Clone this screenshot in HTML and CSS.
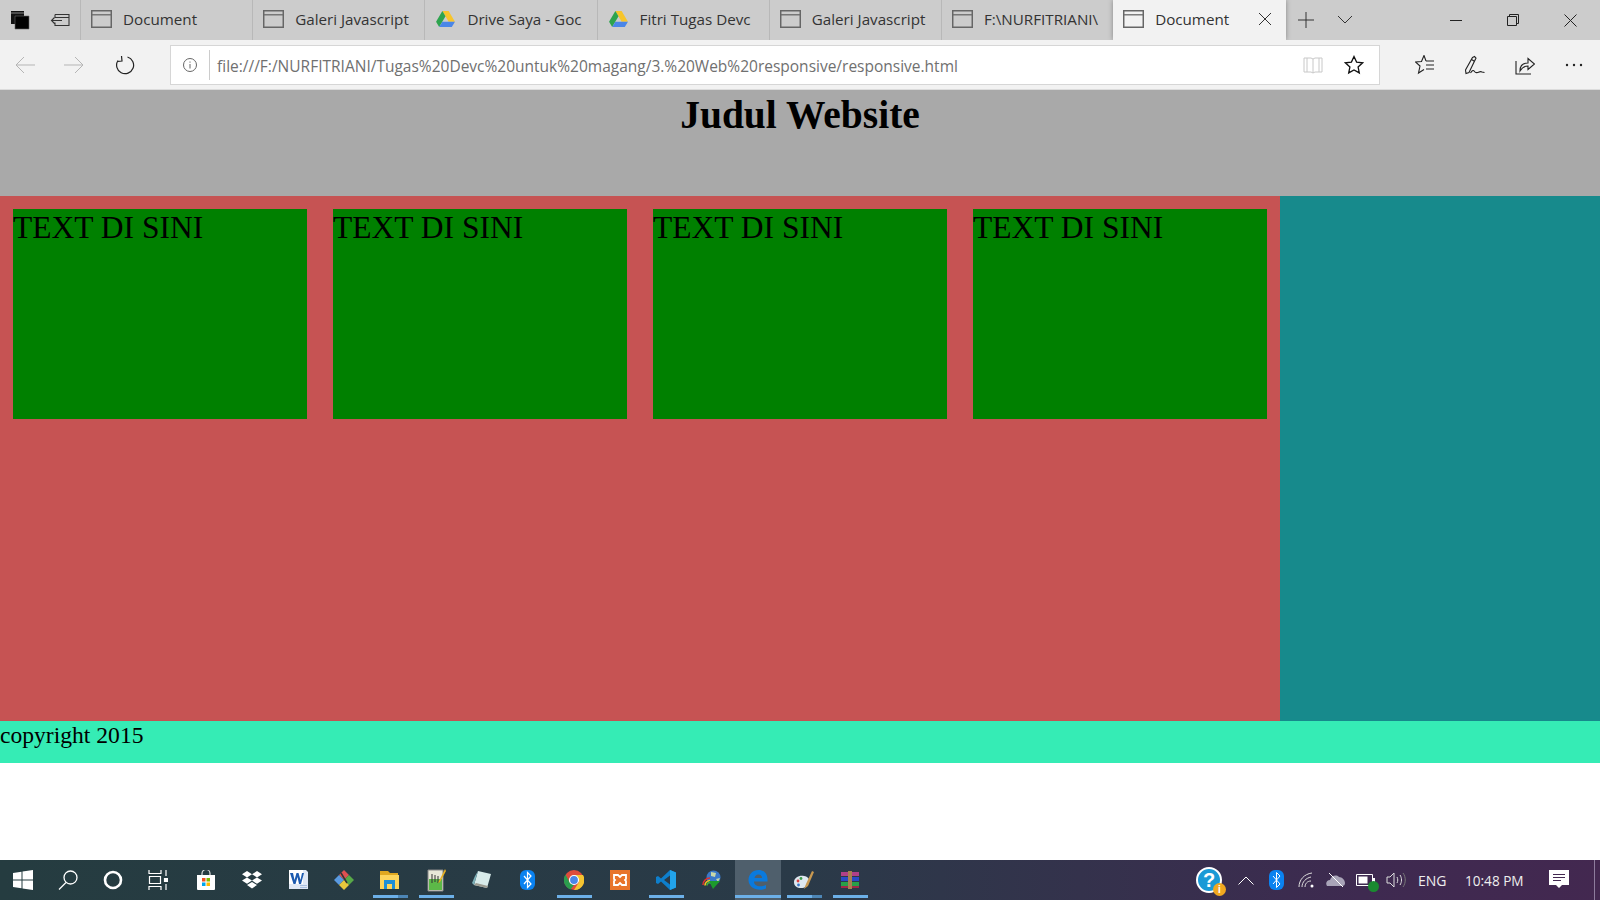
FILE: index.html
```html
<!DOCTYPE html>
<html lang="en">
<head>
  <meta charset="UTF-8" />
  <title>Document</title>
  <link rel="stylesheet" href="styles.css">
</head>
<body>
  <svg class="sprites" width="0" height="0">
    <symbol id="page" viewBox="0 0 20 17"><path d="M.7.7h18.600v15.600H.7z" fill="none" stroke="#666" stroke-width="1.400"/><path d="M1 4.500h18" stroke="#666" stroke-width="1.200"/></symbol>
    <symbol id="drive" viewBox="0 0 22 20">
      <path d="M7.500 1h7l7 12h-7z" fill="#f7c52b"/>
      <path d="M7.500 1 .5 13 4 19l7-12z" fill="#2da44e"/>
      <path d="M4 19h14l3.500-6h-14z" fill="#4a86e8"/>
    </symbol>
  </svg>

  <!-- browser tabs -->
  <div class="tabbar">
    <div class="tab-tools">
      <svg width="20" height="20" viewBox="0 0 20 20"><path d="M1 1h13v13H1z" fill="#111"/><path d="M1 3h13" stroke="#888"/><path d="M5 6h14v13H5z" fill="#000" stroke="#666" stroke-width=".6"/></svg>
      <svg width="20" height="20" viewBox="0 0 20 20" fill="none" stroke="#333" stroke-width="1.100"><path d="M5 4.500h14v11H5v-3M5 7.500v-3M5 7.500h14M12 10.500H1.500M4.500 7.500l-3 3 3 3"/></svg>
    </div>
    <div class="tab"><svg class="tab-icon"><use href="#page"/></svg><span class="tab-title">Document</span></div>
    <div class="tab"><svg class="tab-icon"><use href="#page"/></svg><span class="tab-title">Galeri Javascript</span></div>
    <div class="tab"><svg class="tab-icon"><use href="#drive"/></svg><span class="tab-title">Drive Saya - Goc</span></div>
    <div class="tab"><svg class="tab-icon"><use href="#drive"/></svg><span class="tab-title">Fitri Tugas Devc</span></div>
    <div class="tab"><svg class="tab-icon"><use href="#page"/></svg><span class="tab-title">Galeri Javascript</span></div>
    <div class="tab"><svg class="tab-icon"><use href="#page"/></svg><span class="tab-title">F:\NURFITRIANI\</span></div>
    <div class="tab active">
      <svg class="tab-icon"><use href="#page"/></svg><span class="tab-title">Document</span>
      <svg class="tab-close" width="14" height="14" viewBox="0 0 14 14"><path d="M1 1l12 12M13 1 1 13" stroke="#333" fill="none"/></svg>
    </div>
    <div class="tab-actions">
      <svg width="18" height="18" viewBox="0 0 18 18"><path d="M9 1v16M1 9h16" stroke="#333" fill="none"/></svg>
      <svg width="16" height="10" viewBox="0 0 16 10"><path d="M1 1l7 7 7-7" stroke="#333" fill="none"/></svg>
    </div>
    <div class="window-buttons">
      <svg width="12" height="12" viewBox="0 0 12 12"><path d="M0 6.500h12" stroke="#222" fill="none"/></svg>
      <svg width="12" height="12" viewBox="0 0 12 12" fill="none" stroke="#222"><path d="M.5 2.500h9v9h-9zM2.500 2.500v-2h9v9h-2"/></svg>
      <svg width="13" height="13" viewBox="0 0 13 13"><path d="M.5.5l12 12M12.500.5l-12 12" stroke="#222" fill="none"/></svg>
    </div>
  </div>

  <!-- address bar -->
  <div class="toolbar">
    <div class="nav-buttons">
      <svg width="20" height="18" viewBox="0 0 20 18" fill="none" stroke="#b5b5b5"><path d="M20 9H1M9 1 1 9l8 8"/></svg>
      <svg width="20" height="18" viewBox="0 0 20 18" fill="none" stroke="#b5b5b5"><path d="M0 9h19M11 1l8 8-8 8"/></svg>
      <svg class="refresh" width="20" height="20" viewBox="0 0 20 20" fill="none" stroke="#222" stroke-width="1.200"><path d="M12.500 2A8.500 8.500 0 1 1 3 5.500M6.500 1 7 6 2.500 6.500"/></svg>
    </div>
    <div class="address">
      <svg class="info" width="14" height="14" viewBox="0 0 14 14" fill="none" stroke="#666"><circle cx="7" cy="7" r="6.500"/><path d="M7 6v4.500M7 3.500v1.200"/></svg>
      <span class="url">file:///F:/NURFITRIANI/Tugas%20Devc%20untuk%20magang/3.%20Web%20responsive/responsive.html</span>
      <svg class="reader" width="20" height="18" viewBox="0 0 20 18" fill="none" stroke="#c8c8c8"><path d="M1 2h7l2 1 2-1h7v14h-7l-2 1-2-1H1zM10 3v14M4 2v14M16 2v14"/></svg>
      <svg class="star" width="20" height="20" viewBox="0 0 20 20" fill="none" stroke="#111" stroke-width="1.300"><path d="M10 1.500l2.600 5.600 6 .7-4.500 4.100 1.200 6L10 15l-5.300 2.900 1.200-6L1.400 7.800l6-.7z"/></svg>
    </div>
    <div class="tool-buttons">
      <svg width="20" height="20" viewBox="0 0 20 20" fill="none" stroke="#222" stroke-width="1.100"><path d="M11 6 9 .5 6.500 6.500.5 7 5 11l-1.500 7L9 14.500M11 6h8M11 10h8M11 14h8"/></svg>
      <svg width="20" height="20" viewBox="0 0 20 20" fill="none" stroke="#222" stroke-width="1.100"><path d="M7.500 2.500 9.500 1.500 11 3 4 17.500l-3 1-.5-3.500zM6.500 4.500l2.500 1.500M5.500 18c2-3 3-3 4-1.500s1.500 1.500 3 1 3-1.500 4.500-.5l2.500.5"/></svg>
      <svg width="20" height="20" viewBox="0 0 20 20" fill="none" stroke="#222" stroke-width="1.100"><path d="M1 6v13h15M5 16c0-5 3-8 8-8V3.500L19.500 9 13 14.500V11c-3 0-6 1.500-8 5z"/></svg>
      <svg width="18" height="4" viewBox="0 0 18 4" fill="#222"><circle cx="2" cy="2" r="1.200"/><circle cx="9" cy="2" r="1.200"/><circle cx="16" cy="2" r="1.200"/></svg>
    </div>
  </div>

  <!-- the page itself -->
  <header class="site-header">
    <h1>Judul Website</h1>
  </header>
  <div class="site-main">
    <div class="content">
      <div class="box">TEXT DI SINI</div>
      <div class="box">TEXT DI SINI</div>
      <div class="box">TEXT DI SINI</div>
      <div class="box">TEXT DI SINI</div>
    </div>
    <div class="sidebar"></div>
  </div>
  <footer class="site-footer">copyright 2015</footer>
  <div class="blank"></div>

  <!-- windows taskbar -->
  <div class="taskbar">
    <div class="task-sys">
      <svg width="20" height="20" viewBox="0 0 20 20" fill="#fff"><path d="M0 3l8.500-1.200V9.500H0zM9.500 1.600 20 0v9.500H9.500zM0 10.500h8.500v7.700L0 17zM9.500 10.500H20V20L9.500 18.400z"/></svg>
    </div>
    <div class="task-sys">
      <svg width="20" height="20" viewBox="0 0 20 20" fill="none" stroke="#fff" stroke-width="1.300"><circle cx="12.500" cy="7.500" r="6.500"/><path d="M8 12.500 1 19.500"/></svg>
    </div>
    <div class="task-sys">
      <svg width="20" height="20" viewBox="0 0 20 20" fill="none" stroke="#fff" stroke-width="2.600"><circle cx="10" cy="10" r="8"/></svg>
    </div>
    <div class="task-sys">
      <svg width="20" height="20" viewBox="0 0 20 20" fill="none" stroke="#fff" stroke-width="1.200"><path d="M1 0v3.500h12V0M1 20v-3.500h12V20M1.500 6.500h11v7h-11zM18 0v6M18 14v6"/><path d="M16.500 8.500h3v3h-3z" fill="#fff"/></svg>
    </div>
    <div class="task-apps">
      <div class="app">
        <svg width="20" height="20" viewBox="0 0 20 20"><path d="M6 6V3.500a4 4 0 0 1 8 0V6" fill="none" stroke="#ddd" stroke-width="1.200"/><path d="M1 5h18v14a1 1 0 0 1-1 1H2a1 1 0 0 1-1-1z" fill="#fff"/><path d="M6 8h3.500v3.500H6z" fill="#f25022"/><path d="M10.500 8H14v3.500h-3.500z" fill="#7fba00"/><path d="M6 12.500h3.500V16H6z" fill="#00a4ef"/><path d="M10.500 12.500H14V16h-3.500z" fill="#ffb900"/></svg>
      </div>
      <div class="app">
        <svg width="20" height="19" viewBox="0 0 20 19" fill="#fff"><path d="M5 0l5 3.200L5 6.400 0 3.200zM15 0l5 3.200-5 3.200-5-3.200zM5 6.400l5 3.200-5 3.200-5-3.200zM15 6.400l5 3.200-5 3.200-5-3.200zM5 14l5-3 5 3-5 3.500z"/></svg>
      </div>
      <div class="app">
        <svg width="20" height="20" viewBox="0 0 20 20"><path d="M1 0h17l2 2v17H1z" fill="#dfe8f5"/><path d="M1 0h14v14H1z" fill="#fff"/><path d="M2 3h3l1.500 7L8.500 3h2l2 7L14 3h2l-3 11h-2L9.500 7 7.500 14h-2z" fill="#1d5bb0"/><path d="M12 15h7v1h-7zM12 17h7v1h-7z" fill="#a9c0e0"/></svg>
      </div>
      <div class="app">
        <svg width="20" height="20" viewBox="0 0 20 20"><path d="M10 0l5 5-5 5-5-5z" fill="#e05050"/><path d="M5 5l5 5-5 5-5-5z" fill="#5a9ae0"/><path d="M15 5l5 5-5 5-5-5z" fill="#58a848"/><path d="M10 10l5 5-5 5-5-5z" fill="#e8c83c"/><path d="M7 3l6 10" stroke="#333" stroke-width="1.500"/></svg>
      </div>
      <div class="app running split">
        <svg width="20" height="20" viewBox="0 0 20 20"><path d="M0 1h8l2 2h8v4H0z" fill="#e0a820"/><path d="M0 5h19v14H0z" fill="#fdd55c"/><path d="M4 10h11v9h-3v-5H7v5H4z" fill="#1e8fd8"/></svg>
      </div>
      <div class="app running">
        <svg width="20" height="24" viewBox="0 0 20 24"><path d="M2 2h15v21H2z" fill="#e8e8d8" stroke="#888"/><path d="M3 11h13v11H3z" fill="#5cb848"/><path d="M6 6v9M9 7v7M12 8v7" stroke="#333"/><path d="M19 1 13 13l-1 2 2-1L20 3z" fill="#e8b020"/></svg>
      </div>
      <div class="app">
        <svg width="20" height="20" viewBox="0 0 20 20"><path d="M6 1l13 3-4 14-13-3z" fill="#d8ebea"/><path d="M2 15 6 1 3 6 0 13z" fill="#7cb0b8"/><path d="M2 15l13 3 1-2-12-3z" fill="#9a9a90"/></svg>
      </div>
      <div class="app">
        <svg width="16" height="20" viewBox="0 0 16 20"><rect width="15" height="20" rx="6" fill="#0a82f0"/><path d="M4 6l7 8-3.500 3.500v-15L11 6l-7 8" fill="none" stroke="#fff" stroke-width="1.200"/></svg>
      </div>
      <div class="app running">
        <svg width="20" height="20" viewBox="0 0 20 20"><circle cx="10" cy="10" r="10" fill="#de4c3c"/><path d="M10 5h9a10 10 0 0 1-9 15l5-8z" fill="#f4c430"/><path d="M1.500 4.500 6 13l4 2-3.500 4.500A10 10 0 0 1 1.500 4.500z" fill="#2a9d4e"/><circle cx="10" cy="10" r="4.500" fill="#4a86e8" stroke="#fff" stroke-width="1.200"/></svg>
      </div>
      <div class="app">
        <svg width="20" height="20" viewBox="0 0 20 20"><path d="M0 0h20v20H0z" fill="#e8742a"/><path d="M4 5h4l2 2 2-2h4v4l-1 1 1 1v4h-4l-2-2-2 2H4v-4l1-1-1-1z" fill="none" stroke="#fff" stroke-width="1.800"/></svg>
      </div>
      <div class="app running">
        <svg width="20" height="20" viewBox="0 0 20 20"><path d="M14 0l6 2.500v15L14 20 5 11.500l-3 2.500-2-1V7l2-1 3 2.500z" fill="#0e7fcc"/><path d="M14 0l6 2.500v15L14 20z" fill="#22a4ec"/><path d="M14 5.500 8 10l6 4.500z" fill="#2a3a48"/></svg>
      </div>
      <div class="app">
        <svg width="20" height="20" viewBox="0 0 20 20"><circle cx="11.500" cy="7.500" r="7" fill="#3a78c8"/><path d="M9 2l5 1-1 4-4-1zM14 9l4-1-2 4z" fill="#c8d8a8"/><path d="M1 15a7 7 0 0 1 7-7" fill="none" stroke="#e03030" stroke-width="1.600"/><path d="M3 15.500a5 5 0 0 1 5-5" fill="none" stroke="#f0c020" stroke-width="1.600"/><path d="M5 15.500a3 3 0 0 1 3-3" fill="none" stroke="#40b040" stroke-width="1.600"/><path d="M7 11h11l-7 8z" fill="#1c9a2c"/></svg>
      </div>
      <div class="app running current">
        <svg width="20" height="20" viewBox="0 0 20 20"><path d="M19.500 11.500H6c0 4 5 6.500 12 3.500v3.500C10 22 .5 18 .5 10 .5 4 5 0 10.500 0c5.500 0 9 4 9 9.500zM14 8c0-2-1.500-3.500-3.500-3.500S7 6 6.500 8z" fill="#0a7ade"/></svg>
      </div>
      <div class="app running split">
        <svg width="20" height="20" viewBox="0 0 20 20"><path d="M0 12c0-4 5-7 10-6 4 .8 6 3 5 6-1 4-4 6-8 6-4 0-7-2-7-6z" fill="#dfe8f0"/><circle cx="4" cy="11" r="1.400" fill="#d84040"/><circle cx="7" cy="8.500" r="1.400" fill="#3a9a48"/><circle cx="4.500" cy="15" r="1.400" fill="#3a78c8"/><path d="M18 1 12 14l-2 5 4-3L20 2z" fill="#c89850"/></svg>
      </div>
      <div class="app running">
        <svg width="20" height="18" viewBox="0 0 20 18"><path d="M1 1h18v4H1z" fill="#b04088"/><path d="M1 6h18v4H1z" fill="#2a4ac8"/><path d="M1 11h18v4H1z" fill="#28a048"/><path d="M1 15h18v2H1z" fill="#a02848"/><path d="M8 0h4v18H8z" fill="#a88050"/></svg>
      </div>
    </div>
    <div class="tray">
      <div class="tray-help">
        <span class="help-mark">?</span>
        <span class="help-badge">i</span>
      </div>
      <div class="tray-slot">
        <svg width="16" height="9" viewBox="0 0 16 9"><path d="M.5 8.500l7.500-7.500 7.500 7.500" fill="none" stroke="#fff"/></svg>
      </div>
      <div class="tray-slot">
        <svg width="15" height="20" viewBox="0 0 15 20"><rect width="15" height="20" rx="6" fill="#0a82f0"/><path d="M4 6l7 8-3.500 3.500v-15L11 6l-7 8" fill="none" stroke="#fff"/></svg>
      </div>
      <div class="tray-slot">
        <svg width="16" height="16" viewBox="0 0 16 16" fill="none" stroke="#ddd"><path d="M1 15C1 8 6 2 14 1M4 15c0-5 4-9 9-10M7 15c0-3 2-6 6-6"/><circle cx="14" cy="14" r="1.500" fill="#fff" stroke="none"/></svg>
      </div>
      <div class="tray-slot">
        <svg width="20" height="14" viewBox="0 0 20 14"><path d="M1 13c-2-3 0-6 3-6 1-4 6-6 9-3 3 0 6 3 6 6 0 2-1 3-3 3z" fill="#a9a4b8"/><path d="M3 0l14 14" stroke="#fff"/></svg>
      </div>
      <div class="tray-slot">
        <div class="tray-battery">
          <svg width="20" height="14" viewBox="0 0 20 14"><path d="M.5 1.500h16v11H.5z" fill="none" stroke="#fff"/><path d="M2.500 3.500h9v7h-9z" fill="#fff"/><path d="M17 5h2v4h-2z" fill="#fff"/></svg>
          <span class="battery-badge"></span>
        </div>
      </div>
      <div class="tray-slot">
        <svg width="20" height="16" viewBox="0 0 20 16" fill="none" stroke="#ddd"><path d="M1 5h3l4-4v14l-4-4H1zM11 5c1 2 1 4 0 6M14 3c2 3 2 7 0 10"/><path d="M17 1c3 4 3 10 0 14" stroke="#777"/></svg>
      </div>
      <span class="tray-lang">ENG</span>
      <span class="tray-clock">10:48 PM</span>
      <svg class="tray-notify" width="20" height="20" viewBox="0 0 20 20"><path fill-rule="evenodd" d="M0 0h20v15h-7l-3 3-3-3H0zM4 4v1h12V4zM4 7v1h12V7zM4 10v1h8v-1z" fill="#fff"/></svg>
    </div>
  </div>
</body>
</html>
```

FILE: styles.css
```css
/* Reset and base styles */
* {
  box-sizing: border-box;
  margin: 0;
  padding: 0;
}
body {
  display: flex;
  flex-direction: column;
  height: 100vh;
  overflow: hidden;
  background: #fff;
  color: #000;
  font-family: "Liberation Serif", serif;
}
.sprites {
  display: block;
  height: 0;
}

/* Browser tabs */
.tabbar {
  display: flex;
  height: 40px;
  flex: none;
  background: #cccccc;
  font-family: "Open Sans", sans-serif;
  font-size: 15.2px;
  color: #333;
}
.tab-tools {
  display: flex;
  align-items: center;
  gap: 20px;
  width: 80px;
  padding-left: 10px;
}
.tab {
  display: flex;
  align-items: center;
  width: 172.2px;
  padding-left: 10px;
  padding-right: 10px;
  padding-bottom: 2px;
  border-left: 1px solid #b8b8b8;
  overflow: hidden;
}
.tab-icon {
  flex: none;
  width: 21px;
  height: 18px;
  margin-right: 11px;
}
.tab-title {
  white-space: nowrap;
}
.tab.active {
  width: 173px;
  background: #f2f2f2;
  border-left: none;
  box-shadow: 0 0 5px rgba(0, 0, 0, 0.35);
  padding-right: 14px;
}
.tab.active .tab-title {
  flex: 1;
}
.tab-actions {
  display: flex;
  align-items: center;
  gap: 22px;
  padding-left: 11px;
}
.window-buttons {
  display: flex;
  align-items: center;
  gap: 45px;
  margin-left: auto;
  padding-right: 23px;
}

/* Address bar */
.toolbar {
  display: flex;
  align-items: center;
  height: 50px;
  flex: none;
  background: #f2f2f2;
  border-bottom: 1px solid #dcdcdc;
  padding-top: 5px;
  padding-bottom: 4px;
}
.nav-buttons {
  display: flex;
  align-items: center;
  gap: 29px;
  width: 170px;
  padding-left: 15px;
}
.refresh {
  margin-left: 2px;
}
.address {
  display: flex;
  align-items: center;
  width: 1210px;
  height: 40px;
  background: #fff;
  border: 1px solid #d6d6d6;
}
.info {
  margin-left: 12px;
  margin-right: 12px;
}
.url {
  flex: 1;
  padding-left: 7px;
  padding-top: 2px;
  border-left: 1px solid #ccc;
  line-height: 28px;
  color: #707070;
  font-family: "Open Sans", sans-serif;
  font-size: 15.5px;
  white-space: nowrap;
}
.reader {
  margin-right: 21px;
}
.star {
  margin-right: 15px;
}
.tool-buttons {
  display: flex;
  align-items: center;
  gap: 30px;
  padding-left: 35px;
}

/* Page content */
.site-header {
  height: 106px;
  flex: none;
  background: #a9a9a9;
  padding-top: 2px;
  text-align: center;
}
.site-header h1 {
  font-size: 39.5px;
}
.site-main {
  display: flex;
  height: 525px;
  flex: none;
}
.content {
  display: flex;
  align-items: flex-start;
  width: 80%;
  background: #c65353;
}
.sidebar {
  width: 20%;
  background: #178a8c;
}
.box {
  width: 294px;
  height: 210px;
  margin: 13px;
  padding-top: 1px;
  background: green;
  font-size: 31.5px;
}
.site-footer {
  height: 42px;
  flex: none;
  background: #35ecb5;
  padding-top: 1px;
  font-size: 23.6px;
}
.blank {
  flex: 1;
}

/* Taskbar */
.taskbar {
  position: relative;
  display: flex;
  align-items: center;
  height: 40px;
  flex: none;
  background: linear-gradient(to right, #253c40 0%, #2a3a48 50%, #3e2a50 85%, #432850 100%);
  color: #fff;
  font-family: "Open Sans", sans-serif;
  font-size: 14px;
}
.task-sys {
  display: flex;
  align-items: center;
  justify-content: center;
  width: 45px;
  height: 40px;
}
.task-apps {
  display: flex;
  margin-left: 3px;
}
.app {
  position: relative;
  display: flex;
  align-items: center;
  justify-content: center;
  width: 46px;
  height: 40px;
}
.app.current {
  background: #4f5f6c;
}
.app.running::after {
  content: "";
  position: absolute;
  left: 5.5px;
  right: 5.5px;
  bottom: 2px;
  height: 3px;
  background: #6cb0e8;
}
.app.current::after {
  left: 0;
  right: 0;
}
.app.split::before {
  content: "";
  position: absolute;
  right: 5.5px;
  bottom: 2px;
  width: 10px;
  height: 3px;
  background: #4d86b6;
  z-index: 1;
}

/* System tray */
.tray {
  display: flex;
  align-items: center;
  margin-left: auto;
  width: 404px;
  height: 40px;
  flex: none;
}
.tray::after {
  content: "";
  width: 1px;
  height: 40px;
  margin-left: 25px;
  background: #8d7c9c;
}
.tray-help {
  position: relative;
  display: flex;
  align-items: center;
  justify-content: center;
  width: 26px;
  height: 26px;
  margin-right: 9px;
  border: 2px solid #fff;
  border-radius: 50%;
  background: #1a9ad6;
  font-family: "Liberation Sans", sans-serif;
  font-weight: bold;
  font-size: 20px;
}
.help-badge {
  position: absolute;
  right: -6px;
  bottom: -5px;
  width: 13px;
  height: 13px;
  border-radius: 50%;
  background: #f0a820;
  font-size: 10px;
  line-height: 13px;
  text-align: center;
}
.tray-slot {
  display: flex;
  align-items: center;
  justify-content: center;
  width: 30px;
  flex: none;
}
.tray-battery {
  position: relative;
  display: flex;
}
.battery-badge {
  position: absolute;
  right: -3px;
  bottom: -5px;
  width: 11px;
  height: 11px;
  border-radius: 50%;
  background: #1a8a30;
}
.tray-lang {
  margin-left: 7px;
  width: 47px;
  flex: none;
  color: #eee;
}
.tray-clock {
  width: 84px;
  flex: none;
  color: #eee;
  font-size: 13.6px;
  white-space: nowrap;
}
.tray-notify {
  flex: none;
}
```
